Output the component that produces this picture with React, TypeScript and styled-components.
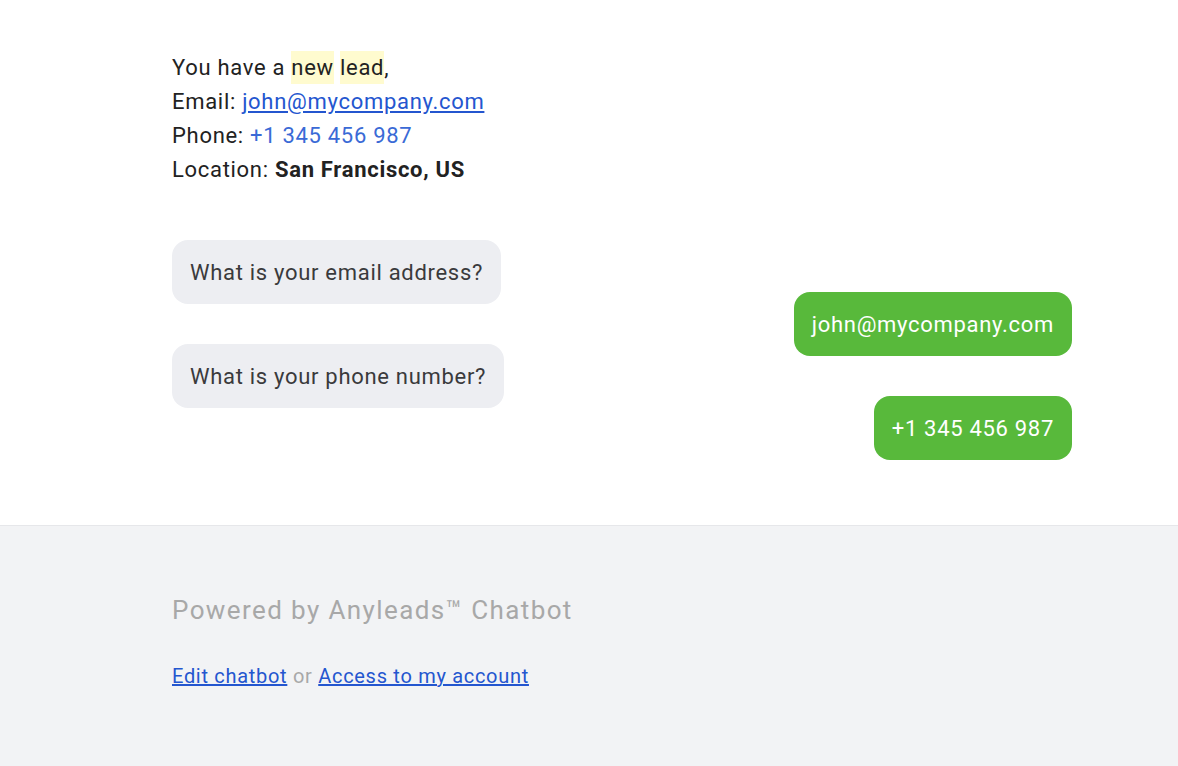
import React from 'react';
import styled, { createGlobalStyle } from 'styled-components';

const GlobalStyle = createGlobalStyle`
    html, body {
        margin: 0;
        padding: 0;
        background: #fff;
        font-family: Roboto, "Liberation Sans", Arial, sans-serif;
    }
`;

const Page = styled.div`
    min-height: 766px;
    display: flex;
    flex-direction: column;
`;

const Main = styled.div`
    padding: 51px 106px 65px 172px;
    border-bottom: 1px solid #e6e7ea;
`;

const Intro = styled.div`
    font-size: 22px;
    letter-spacing: 0.7px;
    line-height: 34px;
    color: #222;
`;

const Mark = styled.span`
    background: #fffbcf;
    padding: 4px 0;
`;

const MailLink = styled.a`
    color: #2456cf;
    text-decoration: underline;
`;

const PhoneLink = styled.a`
    color: #3a6ad6;
    text-decoration: none;
`;

const Conversation = styled.div`
    margin-top: 53px;
    display: flex;
    flex-direction: column;
`;

const Row = styled.div<{ $mine?: boolean }>`
    display: flex;
    justify-content: ${p => (p.$mine ? 'flex-end' : 'flex-start')};
    & + & {
        margin-top: -12px;
    }
`;

const Bubble = styled.div<{ $mine?: boolean }>`
    height: 64px;
    box-sizing: border-box;
    display: flex;
    align-items: center;
    padding: 0 18px;
    border-radius: 16px;
    font-size: 22px;
    letter-spacing: 0.7px;
    background: ${p => (p.$mine ? '#58b93b' : '#edeef2')};
    color: ${p => (p.$mine ? '#fff' : '#3a3a3c')};
`;

const Footer = styled.div`
    flex: 1;
    background: #f2f3f5;
    padding: 68px 172px 60px;
`;

const Powered = styled.div`
    font-size: 26px;
    letter-spacing: 1.4px;
    line-height: 32px;
    color: #a8a8a8;
`;

const Links = styled.div`
    margin-top: 36px;
    font-size: 20px;
    letter-spacing: 0.7px;
    line-height: 28px;
    color: #a8a8a8;
    a {
        color: #2456cf;
        text-decoration: underline;
    }
`;

const messages = [
    { mine: false, text: 'What is your email address?' },
    { mine: true, text: 'john@mycompany.com' },
    { mine: false, text: 'What is your phone number?' },
    { mine: true, text: '+1 345 456 987' },
];

const App: React.FC = () => {
    return (
        <Page>
            <GlobalStyle />
            <Main>
                <Intro>
                    <div>You have a <Mark>new</Mark> <Mark>lead</Mark>,</div>
                    <div>Email: <MailLink href="#">john@mycompany.com</MailLink></div>
                    <div>Phone: <PhoneLink href="#">+1 345 456 987</PhoneLink></div>
                    <div>Location: <b>San Francisco, US</b></div>
                </Intro>
                <Conversation>
                    {messages.map((m, i) => (
                        <Row key={i} $mine={m.mine}>
                            <Bubble $mine={m.mine}>{m.text}</Bubble>
                        </Row>
                    ))}
                </Conversation>
            </Main>
            <Footer>
                <Powered>Powered by Anyleads™ Chatbot</Powered>
                <Links>
                    <a href="#">Edit chatbot</a> or <a href="#">Access to my account</a>
                </Links>
            </Footer>
        </Page>
    );
};

export default App;
